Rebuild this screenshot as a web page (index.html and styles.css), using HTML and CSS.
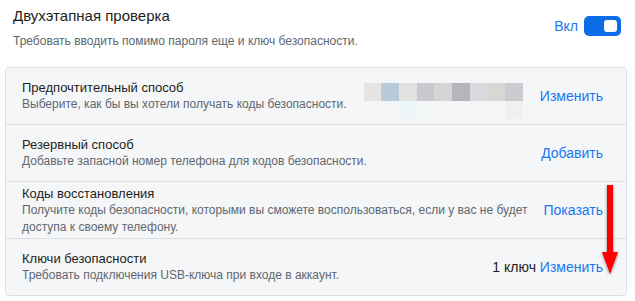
FILE: index.html
```html
<!DOCTYPE html>
<html lang="ru">
<head>
<meta charset="utf-8">
<link rel="stylesheet" href="styles.css">
</head>
<body>
<div class="page">
  <div class="head">
    <div class="head-text">
      <div class="head-title">Двухэтапная проверка</div>
      <div class="head-sub">Требовать вводить помимо пароля еще и ключ безопасности.</div>
    </div>
    <div class="toggle-wrap">
      <span class="toggle-label">Вкл</span>
      <span class="toggle"><span class="knob"></span></span>
    </div>
  </div>

  <div class="card">
    <div class="row">
      <div class="row-text">
        <div class="row-title">Предпочтительный способ</div>
        <div class="row-sub">Выберите, как бы вы хотели получать коды безопасности.</div>
      </div>
      <div class="pix">
        <div class="pix-line">
          <span class="px" style="background:#e6e5e3"></span>
          <span class="px" style="background:#b9cad9"></span>
          <span class="px" style="background:#e1e1df"></span>
          <span class="px" style="background:#c8c8cd"></span>
          <span class="px" style="background:#d3d5d6"></span>
          <span class="px" style="background:#b5b6bb"></span>
          <span class="px" style="background:#dadadc"></span>
          <span class="px" style="background:#d7d8d1"></span>
          <span class="px" style="background:#cdcbcf"></span>
        </div>
        <div class="pix-line">
          <span class="px"></span>
          <span class="px"></span>
          <span class="px" style="background:#eef5f9"></span>
          <span class="px"></span>
          <span class="px"></span>
          <span class="px"></span>
          <span class="px"></span>
          <span class="px"></span>
          <span class="px" style="background:#f0f0f0"></span>
        </div>
      </div>
      <div class="action"><a class="link">Изменить</a></div>
    </div>
    <div class="row">
      <div class="row-text">
        <div class="row-title">Резервный способ</div>
        <div class="row-sub">Добавьте запасной номер телефона для кодов безопасности.</div>
      </div>
      <div class="action"><a class="link">Добавить</a></div>
    </div>
    <div class="row">
      <div class="row-text">
        <div class="row-title">Коды восстановления</div>
        <div class="row-sub">Получите коды безопасности, которыми вы сможете воспользоваться, если у вас не будет доступа к своему телефону.</div>
      </div>
      <div class="action"><a class="link">Показать</a></div>
    </div>
    <div class="row last">
      <div class="row-text">
        <div class="row-title">Ключи безопасности</div>
        <div class="row-sub">Требовать подключения USB-ключа при входе в аккаунт.</div>
      </div>
      <div class="action"><span class="count">1 ключ</span> <a class="link">Изменить</a></div>
    </div>
    <svg class="arrow" width="30" height="100" viewBox="0 0 30 100">
      <defs>
        <filter id="sh" x="-50%" y="-20%" width="200%" height="140%">
          <feGaussianBlur in="SourceAlpha" stdDeviation="1.5"/>
          <feOffset dx="0" dy="1"/>
          <feComponentTransfer><feFuncA type="linear" slope="0.5"/></feComponentTransfer>
          <feMerge><feMergeNode/><feMergeNode in="SourceGraphic"/></feMerge>
        </filter>
      </defs>
      <path d="M12 3 H18 V70 H23 L15 92 L7 70 H12 Z" fill="#ff0000" filter="url(#sh)"/>
    </svg>
  </div>
</div>
</body>
</html>
```

FILE: styles.css
```css
* { box-sizing: border-box; }
html, body { margin: 0; padding: 0; background: #ffffff; }
body {
  font-family: "Liberation Sans", Arial, sans-serif;
  color: #1c1e21;
}
.page {
  width: 635px;
  padding: 6px 8px 0 5px;
}
.head {
  display: flex;
  align-items: flex-start;
  justify-content: space-between;
  padding-left: 8px;
  height: 61px;
}
.head-title {
  font-size: 15px;
  line-height: 20px;
  color: #1c1e21;
}
.head-sub {
  font-size: 12px;
  line-height: 16px;
  margin-top: 7px;
  color: #606770;
}
.toggle-wrap {
  display: flex;
  align-items: center;
  gap: 6px;
  margin-top: 10px;
  margin-right: 6px;
}
.toggle-label {
  font-size: 14px;
  color: #1877f2;
}
.toggle {
  width: 37px;
  height: 20px;
  border-radius: 5px;
  background: #0b6ee6;
  display: flex;
  align-items: center;
  justify-content: flex-end;
  padding-right: 4px;
}
.knob {
  width: 13px;
  height: 12px;
  border-radius: 3px;
  background: #ffffff;
}
.card {
  position: relative;
  width: 622px;
  background: #f5f6f7;
  border: 1px solid #dddfe2;
  border-radius: 4px;
}
.row {
  display: flex;
  align-items: center;
  height: 57px;
  padding: 0 23px 0 16px;
  border-bottom: 1px solid #dddfe2;
}
.row.last { border-bottom: none; height: 56px; }
.row-text {
  flex: 1;
  min-width: 0;
}
.row-title {
  font-size: 13px;
  line-height: 17px;
  color: #1c1e21;
}
.row-sub {
  font-size: 12px;
  line-height: 17px;
  color: #606770;
  padding-right: 8px;
}
.pix {
  align-self: flex-start;
  margin-top: 15px;
  margin-right: 17px;
  display: flex;
  flex-direction: column;
}
.pix-line { display: flex; }
.px {
  display: block;
  width: 17.7px;
  height: 18px;
}
.action {
  font-size: 14px;
  white-space: nowrap;
}
.count { color: #1c1e21; }
.link { color: #1877f2; text-decoration: none; }
.arrow {
  position: absolute;
  left: 589px;
  top: 114px;
}
```
